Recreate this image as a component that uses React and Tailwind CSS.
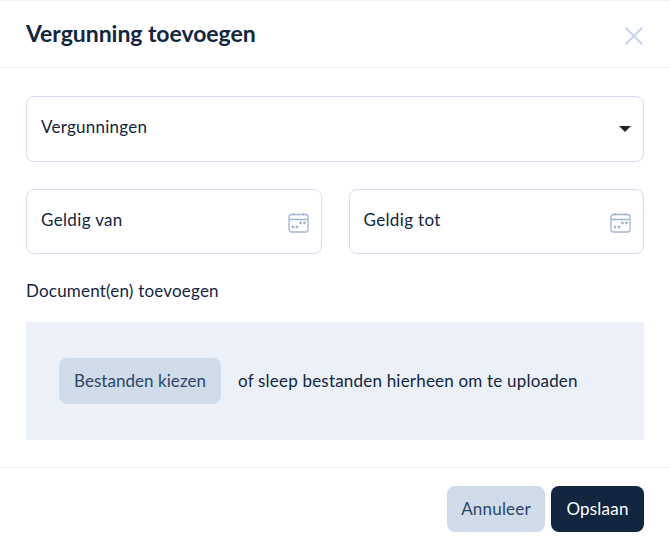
const F = "font-['Lato','Noto_Sans',sans-serif]";

function Cal() {
  return (
    <svg width="21" height="21" viewBox="0 0 21 21" fill="none" stroke="#a3b5d1" strokeWidth="1.3" className="absolute right-[12px] top-[22px]">
      <rect x="1" y="2.5" width="19" height="17.5" rx="2.5" />
      <path d="M1 7.5h19M5.5 1v2.5M15.5 1v2.5" />
      <g fill="#a3b5d1" stroke="none">
        <circle cx="5" cy="15" r="1.4" /><circle cx="9" cy="15" r="1.4" />
        <circle cx="12.5" cy="11" r="1.4" /><circle cx="16.5" cy="11" r="1.4" />
      </g>
    </svg>
  );
}

function Field({ label, className = "" }) {
  return (
    <div className={`relative h-[65px] flex items-center pl-[14px] pb-[3px] bg-white rounded-lg border border-[#d5dff0] ${className}`}>
      <span className="text-[17px] tracking-[0.35px] text-[#12263f]">{label}</span>
      <Cal />
    </div>
  );
}

export default function App() {
  return (
    <div className={`w-[670px] h-[549px] bg-white overflow-hidden flex flex-col shadow-[inset_0_1px_0_#f0f3fa] ${F}`}>
      <header className="h-[68px] shrink-0 flex items-center justify-between pl-[26px] pr-[26px] border-b border-[#edf1f8]">
        <h1 className="text-[23px] font-bold text-[#12263f] leading-none -mt-[1px] tracking-[-0.05px]">Vergunning toevoegen</h1>
        <svg width="20" height="20" viewBox="0 0 20 20" stroke="#cbd8ea" strokeWidth="2.4" className="mt-[4px]">
          <path d="M1.5 1.5l17 17M18.5 1.5l-17 17" />
        </svg>
      </header>
      <main className="h-[399px] shrink-0 px-[26px] pt-[28px]">
        <div className="h-[66px] flex items-center justify-between pl-[14px] pr-[12px] pb-[4px] rounded-lg border border-[#d5dff0]">
          <span className="text-[17px] tracking-[0.25px] text-[#12263f]">Vergunningen</span>
          <span className="mt-[3px] w-0 h-0 border-x-[6px] border-x-transparent border-t-[6px] border-t-[#222]" />
        </div>
        <div className="mt-[27px] grid grid-cols-2 gap-[27px]">
          <Field label="Geldig van" />
          <Field label="Geldig tot" />
        </div>
        <p className="mt-[27px] text-[17px] tracking-[0.2px] leading-5 text-[#12263f]">Document(en) toevoegen</p>
        <div className="mt-[21px] h-[118px] bg-[#ecf1f9] flex items-center pl-[33px] gap-[17px]">
          <button className="h-[46px] w-[162px] rounded-lg bg-[#d0dcea] text-[17px] tracking-[0.05px] text-[#2e4565]">Bestanden kiezen</button>
          <span className="text-[17px] tracking-[0.2px] text-[#12263f]">of sleep bestanden hierheen om te uploaden</span>
        </div>
      </main>
      <footer className="flex-1 border-t border-[#edf1f8] flex justify-end items-start pt-[18px] pr-[26px] gap-[6px]">
        <button className="h-[46px] w-[98px] rounded-lg bg-[#d0dcea] text-[17px] tracking-[0.2px] text-[#2e4565]">Annuleer</button>
        <button className="h-[46px] w-[93px] rounded-lg bg-[#12263f] text-[17px] tracking-[0.2px] text-white">Opslaan</button>
      </footer>
    </div>
  );
}
